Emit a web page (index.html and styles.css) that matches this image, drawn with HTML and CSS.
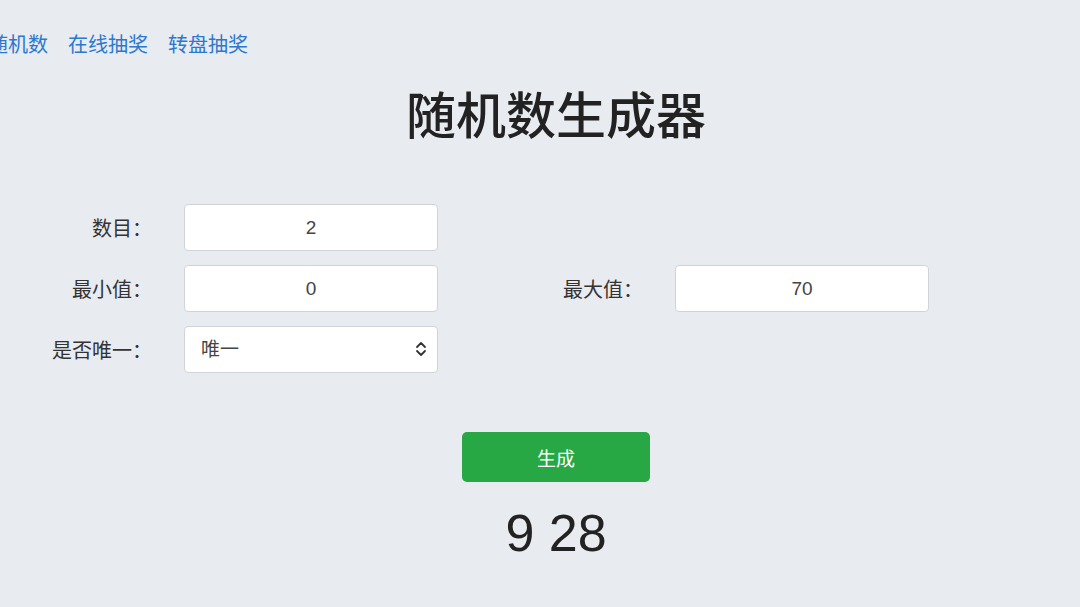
FILE: index.html
```html
<!DOCTYPE html>
<html lang="zh-CN">
<head>
    <meta charset="UTF-8">
    <title>随机数生成器</title>
    <link rel="stylesheet" href="styles.css">
</head>
<body>
    <nav class="nav">
        <a href="#">随机数</a>
        <a href="#">在线抽奖</a>
        <a href="#">转盘抽奖</a>
    </nav>
    <main class="page">
        <h1>随机数生成器</h1>
        <div class="form-grid">
            <label class="label" for="count">数目：</label>
            <input class="field" type="text" id="count" value="2">
            <span class="blank"></span>
            <span class="blank"></span>

            <label class="label" for="min">最小值：</label>
            <input class="field" type="text" id="min" value="0">
            <label class="label" for="max">最大值：</label>
            <input class="field" type="text" id="max" value="70">

            <label class="label" for="unique">是否唯一：</label>
            <div class="select-wrap">
                <select class="field select" id="unique">
                    <option>唯一</option>
                    <option>不唯一</option>
                </select>
                <svg class="chevron" width="12" height="16" viewBox="0 0 12 16">
                    <path d="M2 6 L6 2 L10 6 M2 10 L6 14 L10 10" fill="none" stroke="#333" stroke-width="1.8" stroke-linecap="round" stroke-linejoin="round"/>
                </svg>
            </div>
        </div>
        <button class="generate" onclick="generate()">生成</button>
        <div id="result" class="result">9 28</div>
    </main>
    <script>
        function generate() {
            const count = parseInt(document.getElementById('count').value, 10) || 1;
            const min = parseInt(document.getElementById('min').value, 10) || 0;
            const max = parseInt(document.getElementById('max').value, 10) || 0;
            const unique = document.getElementById('unique').value === '唯一';
            const out = [];
            while (out.length < count) {
                const n = Math.floor(Math.random() * (max - min + 1)) + min;
                if (unique && out.includes(n) && (max - min + 1) > out.length) continue;
                out.push(n);
            }
            document.getElementById('result').textContent = out.join(' ');
        }
    </script>
</body>
</html>
```

FILE: styles.css
```css
body {
    margin: 0;
    background: #e8ebef;
    font-family: "Liberation Sans", "Noto Sans CJK SC", sans-serif;
    color: #333;
    overflow-x: hidden;
}
.nav {
    display: flex;
    gap: 20px;
    margin-left: -12px;
    padding-top: 30px;
    font-size: 20px;
    line-height: 30px;
}
.nav a {
    color: #2a78cf;
    text-decoration: none;
}
.page {
    width: 1112px;
    display: flex;
    flex-direction: column;
    align-items: center;
}
h1 {
    margin: 27px 0 0;
    font-size: 50px;
    line-height: 60px;
    font-weight: 500;
    color: #222;
}
.form-grid {
    align-self: flex-start;
    display: grid;
    grid-template-columns: 152px 254px 173px 254px;
    grid-auto-rows: 47px;
    column-gap: 32px;
    row-gap: 14px;
    margin-top: 57px;
}
.label {
    display: flex;
    align-items: center;
    justify-content: flex-end;
    font-family: "Noto Sans CJK JP", "Noto Sans CJK SC", sans-serif;
    font-size: 20px;
    color: #333;
}
.field {
    box-sizing: border-box;
    width: 100%;
    height: 47px;
    border: 1px solid #ced4da;
    border-radius: 4px;
    background: #fff;
    font-family: inherit;
    font-size: 19px;
    color: #444;
    text-align: center;
    outline: none;
}
.select-wrap {
    position: relative;
}
.select {
    appearance: none;
    -webkit-appearance: none;
    text-align: left;
    padding: 0 16px;
}
.chevron {
    position: absolute;
    right: 11px;
    top: 15px;
    pointer-events: none;
}
.generate {
    margin-top: 59px;
    width: 188px;
    height: 50px;
    border: none;
    border-radius: 5px;
    background: #28a745;
    color: #fff;
    font-family: inherit;
    font-size: 19px;
}
.result {
    margin-top: 21px;
    font-size: 52px;
    line-height: 60px;
    color: #222;
}
```
